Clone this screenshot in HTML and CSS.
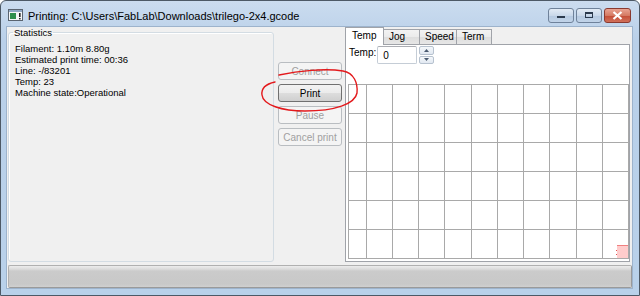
FILE: index.html
```html
<!DOCTYPE html>
<html lang="en">

<head>
  <meta charset="UTF-8">
  <title>Printing</title>
  <link rel="stylesheet" href="styles.css">
</head>

<body>
  <div class="window">
    <div class="titlebar">
      <svg class="app-icon" width="15" height="12" viewBox="0 0 15 12">
        <rect x="0.5" y="0.5" width="14" height="11" fill="#f4f6f8" stroke="#5a6470" />
        <rect x="1" y="1" width="13" height="2" fill="#8fa7c4" />
        <rect x="2" y="4" width="6" height="6" fill="#2f8f4e" />
        <rect x="11" y="4" width="1.6" height="4" fill="#222" />
        <rect x="11" y="9" width="1.6" height="1.4" fill="#222" />
      </svg>
      <span class="title">Printing: C:\Users\FabLab\Downloads\trilego-2x4.gcode</span>
      <div class="caption-buttons">
        <div class="cap-btn">
          <svg width="10" height="8" viewBox="0 0 10 8"><rect x="1" y="5" width="8" height="2" fill="#2b3a4d" /></svg>
        </div>
        <div class="cap-btn">
          <svg width="10" height="8" viewBox="0 0 10 8"><rect x="1.5" y="1.5" width="7" height="5" fill="none" stroke="#2b3a4d" /><rect x="1" y="1" width="8" height="2" fill="#2b3a4d" /></svg>
        </div>
        <div class="cap-btn close">
          <svg width="11" height="9" viewBox="0 0 11 9"><path d="M1.5 1 L9.5 8 M9.5 1 L1.5 8" stroke="#fff" stroke-width="2.2" /></svg>
        </div>
      </div>
    </div>

    <div class="client">
      <div class="main">
        <fieldset class="stats">
          <legend>Statistics</legend>
          <div class="stat-line">Filament: 1.10m 8.80g</div>
          <div class="stat-line">Estimated print time: 00:36</div>
          <div class="stat-line">Line: -/83201</div>
          <div class="stat-line">Temp: 23</div>
          <div class="stat-line">Machine state:Operational</div>
        </fieldset>

        <div class="buttons">
          <button class="btn" disabled>Connect</button>
          <button class="btn">Print</button>
          <button class="btn" disabled>Pause</button>
          <button class="btn" disabled>Cancel print</button>
        </div>

        <div class="notebook">
          <div class="tabs">
            <div class="tab active">Temp</div>
            <div class="tab tab-jog">Jog</div>
            <div class="tab tab-speed">Speed</div>
            <div class="tab tab-term">Term</div>
          </div>
          <div class="page">
            <div class="temp-row">
              <span class="temp-label">Temp:</span>
              <div class="spin-input">0</div>
              <div class="spinner">
                <div class="spin-btn"><svg width="5" height="3" viewBox="0 0 5 3"><path d="M0 3 L2.5 0 L5 3 Z" fill="#4a5a70" /></svg></div>
                <div class="spin-btn"><svg width="5" height="3" viewBox="0 0 5 3"><path d="M0 0 L2.5 3 L5 0 Z" fill="#4a5a70" /></svg></div>
              </div>
            </div>
            <svg class="graph" width="283" height="177" viewBox="0 0 283 177">
              <g stroke="#a9a9a9" stroke-width="1">
                <line x1="2.5" y1="0" x2="2.5" y2="175" />
                <line x1="20.5" y1="0" x2="20.5" y2="175" />
                <line x1="46.5" y1="0" x2="46.5" y2="175" />
                <line x1="72.5" y1="0" x2="72.5" y2="175" />
                <line x1="98.5" y1="0" x2="98.5" y2="175" />
                <line x1="125.5" y1="0" x2="125.5" y2="175" />
                <line x1="151.5" y1="0" x2="151.5" y2="175" />
                <line x1="177.5" y1="0" x2="177.5" y2="175" />
                <line x1="203.5" y1="0" x2="203.5" y2="175" />
                <line x1="230.5" y1="0" x2="230.5" y2="175" />
                <line x1="256.5" y1="0" x2="256.5" y2="175" />
                <line x1="282.5" y1="0" x2="282.5" y2="175" />
                <line x1="2" y1="0.5" x2="283" y2="0.5" />
                <line x1="2" y1="29.5" x2="283" y2="29.5" />
                <line x1="2" y1="58.5" x2="283" y2="58.5" />
                <line x1="2" y1="87.5" x2="283" y2="87.5" />
                <line x1="2" y1="116.5" x2="283" y2="116.5" />
                <line x1="2" y1="145.5" x2="283" y2="145.5" />
                <line x1="2" y1="174.5" x2="283" y2="174.5" />
              </g>
              <rect x="271" y="161" width="11" height="13" fill="#ffcccc" />
              <line x1="271" y1="161.5" x2="282" y2="161.5" stroke="#f08080" />
              <rect x="270" y="166" width="1" height="1" fill="#e05050" />
              <rect x="270" y="170" width="1" height="1" fill="#e05050" />
            </svg>
          </div>
        </div>
      </div>
      <div class="gauge"></div>
    </div>

    <svg class="scribble" width="640" height="296" viewBox="0 0 640 296">
      <path d="M279 75 C298 71 325 68 343 71 C354 73 358 83 357 93 C355 104 335 111 305 111 C282 111 263 105 262 95 C261 88 266 84 275 82"
        fill="none" stroke="#e3191c" stroke-width="1.4" stroke-linecap="round" />
    </svg>
  </div>
</body>

</html>
```

FILE: styles.css
```css
* {
  box-sizing: border-box;
}

body {
  margin: 0;
  font-family: "Liberation Sans", Arial, sans-serif;
  font-size: 10px;
  color: #000;
  background: #fff;
}

.window {
  position: relative;
  width: 640px;
  height: 296px;
  border: 1px solid #4d5966;
  border-radius: 6px 6px 0 0;
  padding: 0 7px 7px 6px;
  background: linear-gradient(#cbdcef, #b9d0e9 40px, #b9d1ea);
  display: flex;
  flex-direction: column;
}

/* title bar */
.titlebar {
  height: 26px;
  display: flex;
  align-items: center;
  padding-left: 1px;
}

.app-icon {
  margin-top: 2px;
}

.title {
  margin-left: 5px;
  margin-top: 3px;
  font-size: 11px;
  color: #000;
  white-space: nowrap;
}

.caption-buttons {
  margin-left: auto;
  margin-right: 1px;
  margin-top: 2px;
  display: flex;
  gap: 2px;
}

.cap-btn {
  width: 26px;
  height: 15px;
  border: 1px solid #6f829a;
  border-radius: 3px;
  background: linear-gradient(#e2ebf5, #c9d8ea 50%, #b5c9e0 51%, #c2d4e9);
  display: flex;
  align-items: center;
  justify-content: center;
}

.cap-btn.close {
  width: 27px;
  border-color: #8a3a30;
  background: linear-gradient(#e9a392, #d57a63 50%, #c44c35 51%, #d0705a);
}

/* client area */
.client {
  flex: 1;
  background: #f0f0f0;
  box-shadow: 0 0 0 1px #9db3cc;
  padding: 0 0 0 1px;
  display: flex;
  flex-direction: column;
}

.main {
  height: 235px;
  display: flex;
}

.stats {
  width: 266px;
  margin: 0;
  padding: 5px 6px;
  border: 1px solid #d3dce3;
  border-radius: 3px;
  box-shadow: inset 1px 1px 0 #fff;
  font-size: 9.5px;
}

.stats legend {
  padding: 0 1px;
  margin-left: -2px;
  line-height: 11px;
}

.stat-line {
  line-height: 11.1px;
  white-space: nowrap;
}

/* buttons column */
.buttons {
  width: 64px;
  margin-left: 4px;
  padding-top: 35px;
  display: flex;
  flex-direction: column;
  gap: 4px;
}

.btn {
  height: 18px;
  padding: 0;
  font-family: inherit;
  font-size: 10px;
  color: #000;
  border: 1px solid #707070;
  border-radius: 3px;
  background: linear-gradient(#f2f2f2, #ebebeb 50%, #dddddd 51%, #cfcfcf);
}

.btn:disabled {
  color: #a0a0a0;
  border-color: #b9bdc1;
  background: #f4f4f4;
}

/* notebook */
.notebook {
  width: 285px;
  margin-left: 3px;
  display: flex;
  flex-direction: column;
}

.tabs {
  height: 18px;
  margin-bottom: -1px;
  display: flex;
  align-items: flex-end;
  position: relative;
  z-index: 1;
}

.tab {
  height: 15px;
  margin-bottom: 1px;
  padding-left: 5px;
  line-height: 14px;
  border: 1px solid #a0a3a9;
  border-bottom: none;
  border-left: none;
  background: linear-gradient(#f3f3f3, #ebebeb 50%, #dedede 51%, #e6e6e6);
}

.tab.active {
  width: 39px;
  height: 18px;
  margin-bottom: 0;
  padding-left: 6px;
  line-height: 15px;
  border-left: 1px solid #a0a3a9;
  background: #fff;
}

.tab-jog {
  width: 36px;
}

.tab-speed {
  width: 37px;
}

.tab-term {
  width: 35px;
}

.page {
  height: 218px;
  border: 1px solid #a0a3a9;
  background: #fff;
  display: flex;
  flex-direction: column;
}

.temp-row {
  height: 39px;
  padding: 1px 0 0 3px;
  display: flex;
  align-items: flex-start;
}

.temp-label {
  margin-top: 1px;
  line-height: 12px;
}

.spin-input {
  width: 40px;
  height: 18px;
  margin-left: 1px;
  padding: 3px 0 0 5px;
  line-height: 12px;
  border: 1px solid #c5cdd6;
  border-top-color: #abadb3;
  border-radius: 2px;
}

.spinner {
  width: 15px;
  height: 18px;
  margin-left: 2px;
  display: flex;
  flex-direction: column;
  gap: 1px;
}

.spin-btn {
  flex: 1;
  border: 1px solid #b7c2cf;
  border-radius: 2px;
  background: linear-gradient(#f5f8fb, #e1e8f1);
  display: flex;
  align-items: center;
  justify-content: center;
}

.graph {
  display: block;
}

/* progress gauge at the bottom */
.gauge {
  height: 23px;
  margin-top: 3px;
  border: 1px solid #b0b0b0;
  border-right-color: #9a9a9a;
  border-bottom-color: #9a9a9a;
  border-radius: 2px;
  background: linear-gradient(#ececec, #dcdcdc 3px, #cbcbcb 5px, #c8c8c8 85%, #d0d0d0);
}

.scribble {
  position: absolute;
  left: -1px;
  top: -1px;
  pointer-events: none;
}
```
